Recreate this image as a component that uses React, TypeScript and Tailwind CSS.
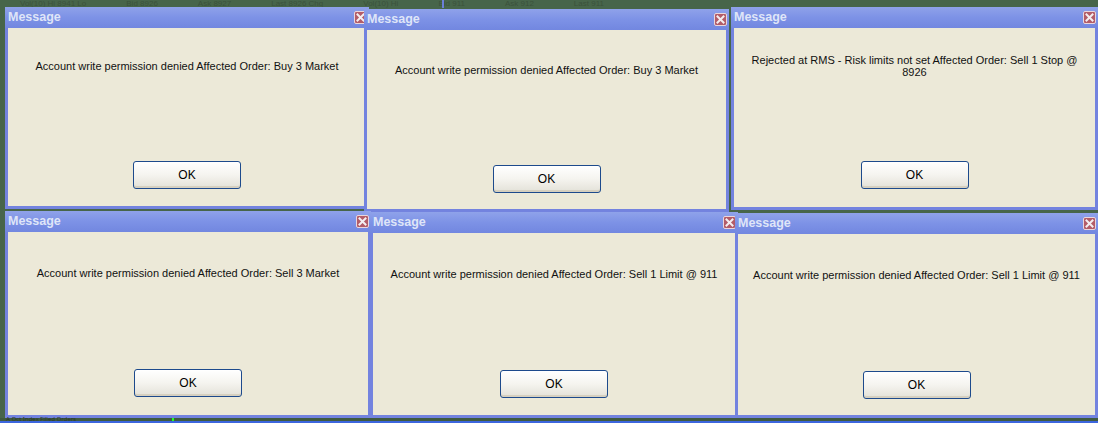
import type { ReactNode } from "react";

type Win = {
	left: string;
	top: string;
	width: string;
	height: string;
	pad: string;
	btnGap: string;
	text: ReactNode;
};

const windows: Win[] = [
	{
		left: "left-[5px]",
		top: "top-[7px]",
		width: "w-[364px]",
		height: "h-[202px]",
		pad: "pt-[0px]",
		btnGap: "mt-[57px]",
		text: "Account write permission denied Affected Order: Buy 3 Market",
	},
	{
		left: "left-[364px]",
		top: "top-[9px]",
		width: "w-[365px]",
		height: "h-[203px]",
		pad: "pt-[2px]",
		btnGap: "mt-[57px]",
		text: "Account write permission denied Affected Order: Buy 3 Market",
	},
	{
		left: "left-[731px]",
		top: "top-[7px]",
		width: "w-[367px]",
		height: "h-[203px]",
		pad: "pt-[0px]",
		btnGap: "mt-[57px]",
		text: (
			<>
				Rejected at RMS - Risk limits not set Affected Order: Sell 1 Stop @
				<br />
				8926
			</>
		),
	},
	{
		left: "left-[5px]",
		top: "top-[211px]",
		width: "w-[366px]",
		height: "h-[207px]",
		pad: "pt-[3px]",
		btnGap: "mt-[58px]",
		text: "Account write permission denied Affected Order: Sell 3 Market",
	},
	{
		left: "left-[370px]",
		top: "top-[212px]",
		width: "w-[368px]",
		height: "h-[206px]",
		pad: "pt-[3px]",
		btnGap: "mt-[58px]",
		text: "Account write permission denied Affected Order: Sell 1 Limit @ 911",
	},
	{
		left: "left-[735px]",
		top: "top-[213px]",
		width: "w-[363px]",
		height: "h-[205px]",
		pad: "pt-[3px]",
		btnGap: "mt-[58px]",
		text: "Account write permission denied Affected Order: Sell 1 Limit @ 911",
	},
];

function CloseButton() {
	return (
		<div className="w-[13px] h-[13px] rounded-[2px] border border-[#ead6dc] bg-[#b35c68] flex items-center justify-center">
			<svg width="9" height="9" viewBox="0 0 9 9" aria-hidden="true">
				<path d="M1.5 1.5L7.5 7.5M7.5 1.5L1.5 7.5" stroke="#f4eef0" strokeWidth={2} strokeLinecap="square" />
			</svg>
		</div>
	);
}

function MessageWindow({ win }: { win: Win }) {
	return (
		<div
			className={`absolute ${win.left} ${win.top} ${win.width} ${win.height} flex flex-col bg-[#7383df] border-x-[3px] border-b-[3px] border-[#7383df]`}
		>
			{/* Title bar */}
			<div className="h-[21px] -mx-[3px] pl-[3px] pr-[2px] flex items-center justify-between bg-gradient-to-b from-[#8fa2ea] via-[#7d92e6] to-[#7287e0]">
				<span className="text-[12.5px] font-bold text-[#dfe5f8] leading-none [font-family:'Liberation_Sans',Arial,sans-serif]">
					Message
				</span>
				<CloseButton />
			</div>

			{/* Body */}
			<div className={`flex-1 bg-[#ece9d8] flex flex-col items-center ${win.pad}`}>
				<div className="h-[76px] w-full flex items-center justify-center text-center text-[11px] leading-[12px] text-[#111] [font-family:'Liberation_Sans',Arial,sans-serif]">
					<p>{win.text}</p>
				</div>
				<button
					type="button"
					className={`${win.btnGap} w-[108px] h-[28px] rounded-[3px] border border-[#1d4a8c] bg-gradient-to-b from-[#ffffff] via-[#f5f4ef] to-[#e3e1d8] shadow-[inset_0_-2px_0_#d6d0c0,inset_0_1px_0_#ffffff] text-[12px] text-black [font-family:'Liberation_Sans',Arial,sans-serif]`}
				>
					OK
				</button>
			</div>
		</div>
	);
}

export default function App() {
	return (
		<div className="relative w-[1098px] h-[423px] overflow-hidden bg-[#47654a]">
			{/* Desktop behind: faint chart header text */}
			<div className="absolute left-0 top-0 w-full h-[8px] flex gap-[40px] px-[20px] text-[8px] leading-[8px] text-[#3b523c] [font-family:'Liberation_Sans',Arial,sans-serif]">
				<span>Vol(10) Hi 8941 Lo</span>
				<span>Bid 8926</span>
				<span>Ask 8927</span>
				<span>Last 8926 Chg</span>
				<span>Vol(10) Hi</span>
				<span>Bid 911</span>
				<span>Ask 912</span>
				<span>Last 911</span>
			</div>
			<div className="absolute left-[442px] top-0 w-[2px] h-[8px] bg-[#6a7fd8]" />

			{windows.map((w, i) => (
				<MessageWindow key={i} win={w} />
			))}

			{/* Bottom strip */}
			<div className="absolute left-0 top-[418px] w-full h-[3px] bg-[#3f5a40] text-[6px] leading-[3px] px-[6px] text-[#2a382a]">
				<span>A Oct Index Filled Orders</span>
			</div>
			<div className="absolute left-[172px] top-[418px] w-[2px] h-[3px] bg-[#22ff22]" />
			<div className="absolute left-0 top-[421px] w-full h-[2px] bg-[#3c66de]" />
		</div>
	);
}
